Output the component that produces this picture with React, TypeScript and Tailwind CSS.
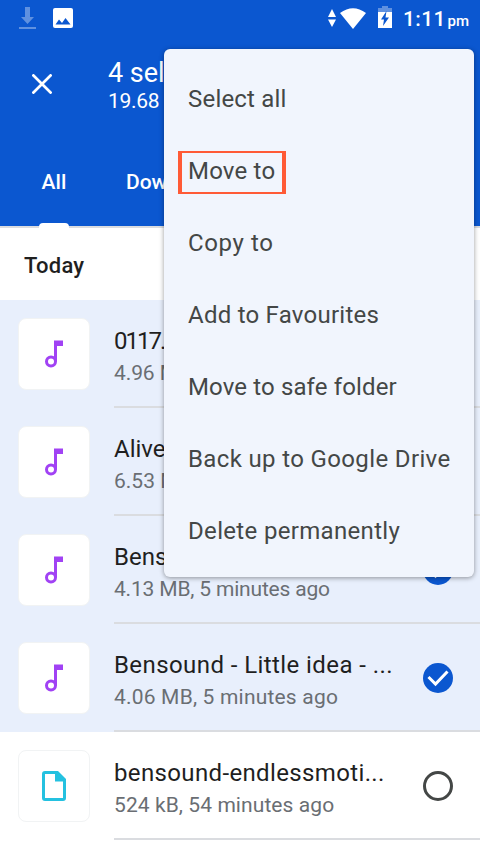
import React, { useState } from 'react'

interface FileItem {
    name: string;
    details: string;
    kind: 'audio' | 'document';
    nameClass?: string;
    detailsClass?: string;
}

interface MenuItem {
    label: string;
    className: string;
}

const files: FileItem[] = [
    { name: '0117.', details: '4.96 M', kind: 'audio', nameClass: 'tracking-[-2px]', detailsClass: 'tracking-[-0.1px]' },
    { name: 'Alive', details: '6.53 M', kind: 'audio' },
    { name: 'Bens', details: '4.13 MB, 5 minutes ago', kind: 'audio', detailsClass: 'tracking-[-0.18px]' },
    { name: 'Bensound - Little idea - ...', details: '4.06 MB, 5 minutes ago', kind: 'audio', nameClass: 'tracking-[0.42px]', detailsClass: 'tracking-[0.19px]' },
    { name: 'bensound-endlessmoti...', details: '524 kB, 54 minutes ago', kind: 'document', nameClass: 'tracking-[0.36px]', detailsClass: 'tracking-[0.08px]' },
];

const menuItems: MenuItem[] = [
    { label: 'Select all', className: 'tracking-[0.2px]' },
    { label: 'Move to', className: 'tracking-[0.2px]' },
    { label: 'Copy to', className: 'tracking-[0.6px]' },
    { label: 'Add to Favourites', className: 'tracking-[0.24px]' },
    { label: 'Move to safe folder', className: 'tracking-[0.13px]' },
    { label: 'Back up to Google Drive', className: 'tracking-[0.36px]' },
    { label: 'Delete permanently', className: 'tracking-[0.33px]' },
];

const StatusBar = () => (
    <div className="flex h-9 items-center justify-between pl-[18px] pr-[11px] text-white">
        <div className="flex items-center">
            <svg width="18" height="24" viewBox="0 0 18 24" fill="#fff" fillOpacity="0.35">
                <path d="M7 1h5v10h4l-6.500 7L3 11h4zM1 21h17v2H1z" />
            </svg>
            <svg className="ml-[17px]" width="20" height="20" viewBox="0 0 20 20">
                <rect width="20" height="20" rx="2" fill="#fff" />
                <path d="M2.500 16.500l3.500-5 3 3.500L12.500 10l5 6.500z" fill="#0b57d0" />
            </svg>
        </div>
        <div className="flex items-center">
            <svg width="8" height="18" viewBox="0 0 8 18" fill="#fff">
                <path d="M0 8l4-8 4 8zM0 10.500h8l-4 7.500z" />
            </svg>
            <svg className="ml-1" width="26" height="21" viewBox="0 0 26 21" fill="#fff">
                <path d="M13 21L0 5Q13-4.500 26 5z" />
            </svg>
            <svg className="ml-3 -mt-0.5" width="14" height="22" viewBox="0 0 14 22">
                <path d="M4 0h6v2h4v4H0V2h4z" fill="#fff" fillOpacity="0.35" />
                <path d="M0 6h14v16H0z" fill="#fff" />
                <path d="M8.500 5L3 13.500h3L5 20l6-8.500H7.500z" fill="#0b57d0" />
            </svg>
            <div className="ml-[11px] flex w-[66px] items-baseline justify-between whitespace-nowrap pt-[3px] font-medium leading-6">
                <span className="text-[21px] tracking-[0.4px]">1:11</span>
                <span className="text-[15px]">pm</span>
            </div>
        </div>
    </div>
)

const MusicIcon = () => (
    <svg width="18" height="28" viewBox="0 0 18 28">
        <circle cx="6" cy="21.500" r="4.500" fill="none" stroke="#a142f4" strokeWidth="3" />
        <path d="M9 0.500h9v5.500h-6v15.500H9z" fill="#a142f4" />
    </svg>
)

const DocumentIcon = () => (
    <svg width="24" height="30" viewBox="0 0 24 30">
        <path d="M3 0h13l8 8v19a3 3 0 0 1-3 3H3a3 3 0 0 1-3-3V3a3 3 0 0 1 3-3zm0 3v24h18V10.500h-8V3z" fill="#24c1e0" fillRule="evenodd" />
    </svg>
)

const FileRow = ({ file, selected, onToggle }: { file: FileItem; selected: boolean; onToggle: () => void }) => (
    <div onClick={onToggle} className={`flex h-[108px] cursor-pointer pl-[18px] ${selected ? 'bg-[#e8effc]' : 'bg-white'}`}>
        <div className="mt-[18px] flex h-[72px] w-[72px] shrink-0 items-center justify-center rounded-lg border border-[#f1f3f4] bg-white">
            {file.kind === 'audio' ? <MusicIcon /> : <DocumentIcon />}
        </div>
        <div className="ml-6 flex flex-1 justify-between border-b-2 border-[#dadce0] pr-[27px]">
            <div className="flex flex-col gap-px whitespace-nowrap pt-[25px]">
                <p className="text-2xl leading-8 text-[#1f1f1f]"><span className={file.nameClass}>{file.name}</span></p>
                <p className="text-[21px] leading-[30px] text-[#6a6e73]"><span className={file.detailsClass}>{file.details}</span></p>
            </div>
            <svg className="mt-[39px] shrink-0" width="30" height="30" viewBox="0 0 30 30" fill="none">
                {selected ? (
                    <>
                        <circle cx="15" cy="15" r="15" fill="#0b57d0" />
                        <path d="M5.500 14l7 7L24.500 8.500" stroke="#fff" strokeWidth="3" />
                    </>
                ) : (
                    <circle cx="15" cy="15" r="13.500" stroke="#444746" strokeWidth="3" />
                )}
            </svg>
        </div>
    </div>
)

const App: React.FC = () => {
    const [selected, setSelected] = useState<number[]>([0, 1, 2, 3]);

    const toggle = (index: number) => {
        setSelected((prev) => prev.includes(index) ? prev.filter((i) => i !== index) : [...prev, index]);
    };

    return (
        <div className="relative h-[854px] w-[480px] overflow-hidden bg-white font-[Roboto,sans-serif]">
            <header className="relative h-[226px] bg-[#0b57d0] text-white">
                <StatusBar />
                <div className="flex h-24 items-center pl-8">
                    <svg width="20" height="20" viewBox="0 0 20 20" stroke="#fff" strokeWidth="2.700">
                        <path d="M0.500 0.500l19 19M19.500 0.500l-19 19" />
                    </svg>
                    <div className="ml-14 whitespace-nowrap pt-px">
                        <h1 className="text-[27px] leading-8">4 sel</h1>
                        <p className="text-[21px] leading-6 tracking-[-0.3px]">19.68 M</p>
                    </div>
                </div>
                <div className="flex h-24 text-[21px] font-medium">
                    <div className="flex w-[108px] flex-col items-center justify-between">
                        <span className="pt-[34px] leading-8 tracking-[0.2px]">All</span>
                        <span className="h-[5px] w-[30px] rounded-t bg-white" />
                    </div>
                    <span className="pl-[18px] pt-[34px] leading-8">Dow</span>
                </div>
            </header>
            <div className="flex h-[74px] items-center border-t-2 border-[#dadce0] pl-6 pt-0.5">
                <h2 className="text-[22px] font-medium tracking-[0.2px] text-[#1f1f1f]">Today</h2>
            </div>
            {files.map((file, index) => (
                <FileRow key={file.details} file={file} selected={selected.includes(index)} onToggle={() => toggle(index)} />
            ))}

            <div className="absolute left-[164px] top-[49px] w-[310px] rounded-md bg-[#f1f5fd] py-3 shadow-[0_1px_5px_rgba(0,0,0,0.4)]">
                {menuItems.map((item) => (
                    <div key={item.label} className="flex h-[72px] cursor-pointer items-center whitespace-nowrap pl-6 pt-1 text-2xl text-[#444746]">
                        <span className={item.className}>{item.label}</span>
                    </div>
                ))}
                <div className="pointer-events-none absolute left-[14px] top-[102px] h-[43px] w-[108px] border-x-4 border-y-2 border-[#ff5a36]" />
            </div>
        </div>
    )
}

export default App
